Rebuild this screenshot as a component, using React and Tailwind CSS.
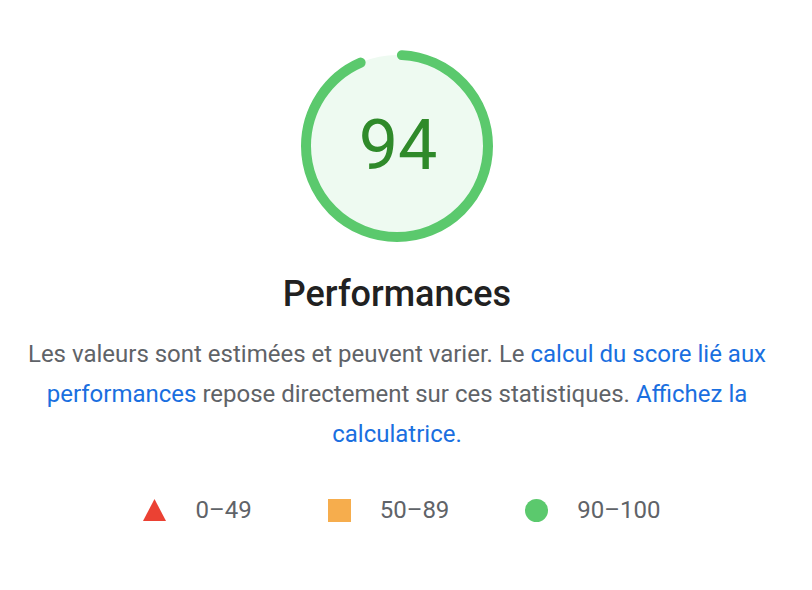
import React from "react";

const SCORE = 94;

function Gauge({ score }) {
  const r = 91;
  const c = 2 * Math.PI * r;
  return (
    <div className="relative w-[196px] h-[196px]">
      <svg width="196" height="196" viewBox="0 0 196 196" className="-rotate-90">
        <circle cx="98" cy="98" r={r} fill="#eefaf1" />
        <circle
          cx="98"
          cy="98"
          r={r}
          fill="none"
          stroke="#5bc96d"
          strokeWidth="10"
          strokeLinecap="round"
          strokeDasharray={`${(c * score) / 100 - 9} ${c}`}
          strokeDashoffset="-5"
        />
      </svg>
      <div className="absolute inset-0 flex items-center justify-center text-[70px] leading-none text-[#2f8a2a] pb-[2px] pl-[2px]">
        {score}
      </div>
    </div>
  );
}

export default function App() {
  return (
    <div
      className="w-[812px] h-[590px] bg-white flex flex-col items-center pt-[48px] pr-[18px]"
      style={{ fontFamily: "Roboto, 'Liberation Sans', sans-serif" }}
    >
      <Gauge score={SCORE} />

      <h1 className="mt-[30px] text-[36px] leading-[40px] font-medium text-[#212121]">
        Performances
      </h1>

      <p className="mt-[20px] w-[748px] text-center text-[24px] leading-[40px] text-[#5f6368]">
        Les valeurs sont estimées et peuvent varier. Le{" "}
        <a className="text-[#1a6fe0]">calcul du score lié aux performances</a>{" "}
        repose directement sur ces statistiques.{" "}
        <a className="text-[#1a6fe0]">Affichez la calculatrice.</a>
      </p>

      <div className="mt-[36px] flex items-center gap-[76px] pl-[10px] text-[24px] leading-[40px] text-[#5f6368]">
        <div className="flex items-center gap-[29px]">
          <svg width="23" height="22" viewBox="0 0 23 22">
            <polygon points="11.5,0 23,22 0,22" fill="#eb4133" />
          </svg>
          <span>0–49</span>
        </div>
        <div className="flex items-center gap-[29px]">
          <div className="w-[23px] h-[23px] bg-[#f6ad4d]" />
          <span>50–89</span>
        </div>
        <div className="flex items-center gap-[29px]">
          <div className="w-[23px] h-[23px] rounded-full bg-[#5bc96d]" />
          <span>90–100</span>
        </div>
      </div>
    </div>
  );
}
